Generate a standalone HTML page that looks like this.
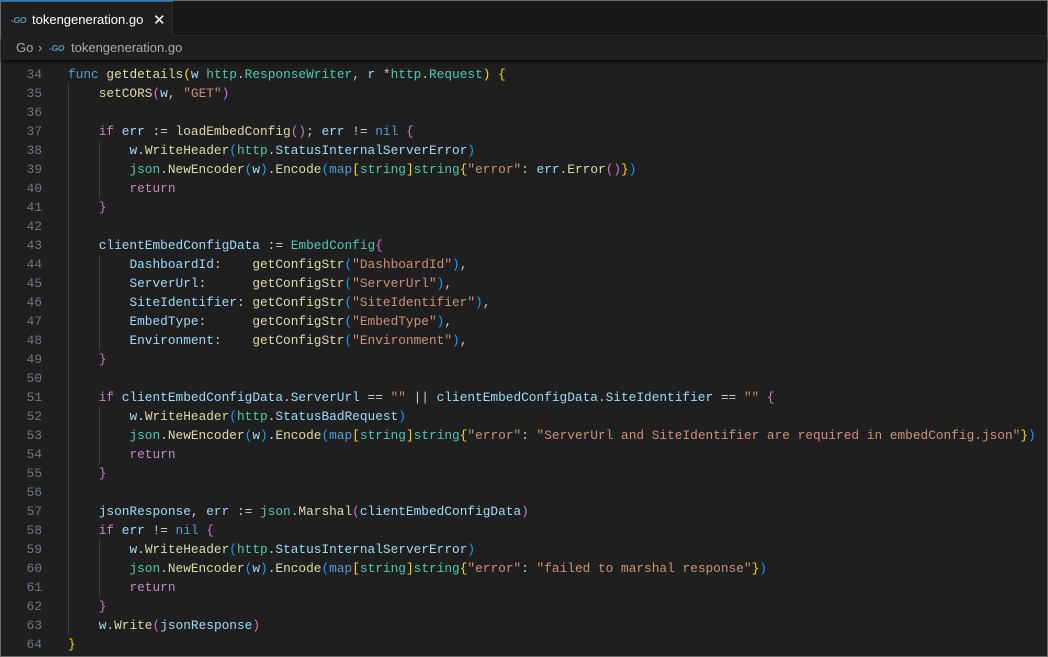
<!DOCTYPE html><html><head><meta charset="utf-8"><style>
*{margin:0;padding:0;box-sizing:border-box}
body{width:1048px;height:657px;background:#1f1f1f;overflow:hidden;font-family:"Liberation Sans",sans-serif}
.win{position:absolute;left:0;top:0;width:1048px;height:657px;border:1px solid #6b6b6b;background:#1f1f1f}
.tabs{position:absolute;left:0;top:0;width:1046px;height:35px;background:#181818;border-bottom:1px solid #2b2b2b}
.tab{position:absolute;left:0;top:0;width:172px;height:36px;background:#1f1f1f;border-top:1px solid #0078d4;border-right:1px solid #2b2b2b;color:#fff;font-size:13px}
.tab span{position:absolute;top:10px}
.go{color:#519aba;font-weight:bold;font-size:8.5px;font-style:italic;letter-spacing:-0.3px}
.bc{position:absolute;left:0;top:36px;width:1046px;height:23px;background:#1f1f1f;color:#a9a9a9;font-size:13px;box-shadow:0 2px 3px #0a0a0a}
.bc span{position:absolute;top:3px}
.code{position:absolute;left:0;top:64px;font-family:"Liberation Mono",monospace;font-size:12.8px;line-height:19px;white-space:pre;color:#cccccc}
.ln{position:absolute;left:0;width:41px;text-align:right;color:#6e7681}
.l{position:absolute;left:67px}
.g{position:absolute;width:1px;background:#404040}
.k{color:#569cd6}.f{color:#dcdcaa}.v{color:#9cdcfe}.t{color:#4ec9b0}.s{color:#ce9178}.c{color:#c586c0}
.b1{color:#ffd700}.b2{color:#da70d6}.b3{color:#179fff}
</style></head><body><div class="win">
<div class="tabs"><div class="tab"><span class="go" style="left:10px;top:13px">-GO</span><span style="left:31px">tokengeneration.go</span><span style="left:152px;top:9px;font-size:15px">✕</span></div></div>
<div class="bc"><span style="left:15px">Go</span><span style="left:37px">›</span><span class="go" style="left:48px;top:6px">-GO</span><span style="left:70px">tokengeneration.go</span></div>
<div class="g" style="left:67px;top:83px;height:551px"></div>
<div class="g" style="left:98px;top:140px;height:57px"></div>
<div class="g" style="left:98px;top:254px;height:95px"></div>
<div class="g" style="left:98px;top:406px;height:57px"></div>
<div class="g" style="left:98px;top:539px;height:57px"></div>
<div class="code" id="c"></div>
</div>
<script>
const L=[
'<span class="k">func</span> <span class="f">getdetails</span><span class="b1">(</span><span class="v">w</span> <span class="t">http</span>.<span class="t">ResponseWriter</span>, <span class="v">r</span> *<span class="t">http</span>.<span class="t">Request</span><span class="b1">)</span> <span class="b1">{</span>',
'    <span class="f">setCORS</span><span class="b2">(</span><span class="v">w</span>, <span class="s">"GET"</span><span class="b2">)</span>',
'',
'    <span class="c">if</span> <span class="v">err</span> := <span class="f">loadEmbedConfig</span><span class="b2">()</span>; <span class="v">err</span> != <span class="k">nil</span> <span class="b2">{</span>',
'        <span class="v">w</span>.<span class="f">WriteHeader</span><span class="b3">(</span><span class="t">http</span>.<span class="v">StatusInternalServerError</span><span class="b3">)</span>',
'        <span class="t">json</span>.<span class="f">NewEncoder</span><span class="b3">(</span><span class="v">w</span><span class="b3">)</span>.<span class="f">Encode</span><span class="b3">(</span><span class="k">map</span><span class="b1">[</span><span class="t">string</span><span class="b1">]</span><span class="t">string</span><span class="b1">{</span><span class="s">"error"</span>: <span class="v">err</span>.<span class="f">Error</span><span class="b2">()</span><span class="b1">}</span><span class="b3">)</span>',
'        <span class="c">return</span>',
'    <span class="b2">}</span>',
'',
'    <span class="v">clientEmbedConfigData</span> := <span class="t">EmbedConfig</span><span class="b2">{</span>',
'        <span class="v">DashboardId</span>:    <span class="f">getConfigStr</span><span class="b3">(</span><span class="s">"DashboardId"</span><span class="b3">)</span>,',
'        <span class="v">ServerUrl</span>:      <span class="f">getConfigStr</span><span class="b3">(</span><span class="s">"ServerUrl"</span><span class="b3">)</span>,',
'        <span class="v">SiteIdentifier</span>: <span class="f">getConfigStr</span><span class="b3">(</span><span class="s">"SiteIdentifier"</span><span class="b3">)</span>,',
'        <span class="v">EmbedType</span>:      <span class="f">getConfigStr</span><span class="b3">(</span><span class="s">"EmbedType"</span><span class="b3">)</span>,',
'        <span class="v">Environment</span>:    <span class="f">getConfigStr</span><span class="b3">(</span><span class="s">"Environment"</span><span class="b3">)</span>,',
'    <span class="b2">}</span>',
'',
'    <span class="c">if</span> <span class="v">clientEmbedConfigData</span>.<span class="v">ServerUrl</span> == <span class="s">""</span> || <span class="v">clientEmbedConfigData</span>.<span class="v">SiteIdentifier</span> == <span class="s">""</span> <span class="b2">{</span>',
'        <span class="v">w</span>.<span class="f">WriteHeader</span><span class="b3">(</span><span class="t">http</span>.<span class="v">StatusBadRequest</span><span class="b3">)</span>',
'        <span class="t">json</span>.<span class="f">NewEncoder</span><span class="b3">(</span><span class="v">w</span><span class="b3">)</span>.<span class="f">Encode</span><span class="b3">(</span><span class="k">map</span><span class="b1">[</span><span class="t">string</span><span class="b1">]</span><span class="t">string</span><span class="b1">{</span><span class="s">"error"</span>: <span class="s">"ServerUrl and SiteIdentifier are required in embedConfig.json"</span><span class="b1">}</span><span class="b3">)</span>',
'        <span class="c">return</span>',
'    <span class="b2">}</span>',
'',
'    <span class="v">jsonResponse</span>, <span class="v">err</span> := <span class="t">json</span>.<span class="f">Marshal</span><span class="b2">(</span><span class="v">clientEmbedConfigData</span><span class="b2">)</span>',
'    <span class="c">if</span> <span class="v">err</span> != <span class="k">nil</span> <span class="b2">{</span>',
'        <span class="v">w</span>.<span class="f">WriteHeader</span><span class="b3">(</span><span class="t">http</span>.<span class="v">StatusInternalServerError</span><span class="b3">)</span>',
'        <span class="t">json</span>.<span class="f">NewEncoder</span><span class="b3">(</span><span class="v">w</span><span class="b3">)</span>.<span class="f">Encode</span><span class="b3">(</span><span class="k">map</span><span class="b1">[</span><span class="t">string</span><span class="b1">]</span><span class="t">string</span><span class="b1">{</span><span class="s">"error"</span>: <span class="s">"failed to marshal response"</span><span class="b1">}</span><span class="b3">)</span>',
'        <span class="c">return</span>',
'    <span class="b2">}</span>',
'    <span class="v">w</span>.<span class="f">Write</span><span class="b2">(</span><span class="v">jsonResponse</span><span class="b2">)</span>',
'<span class="b1">}</span>'];
let h='';L.forEach((s,i)=>{h+=`<div class="ln" style="top:${i*19}px">${34+i}</div><div class="l" style="top:${i*19}px">${s}</div>`});
document.getElementById('c').innerHTML=h;
</script></body></html>
